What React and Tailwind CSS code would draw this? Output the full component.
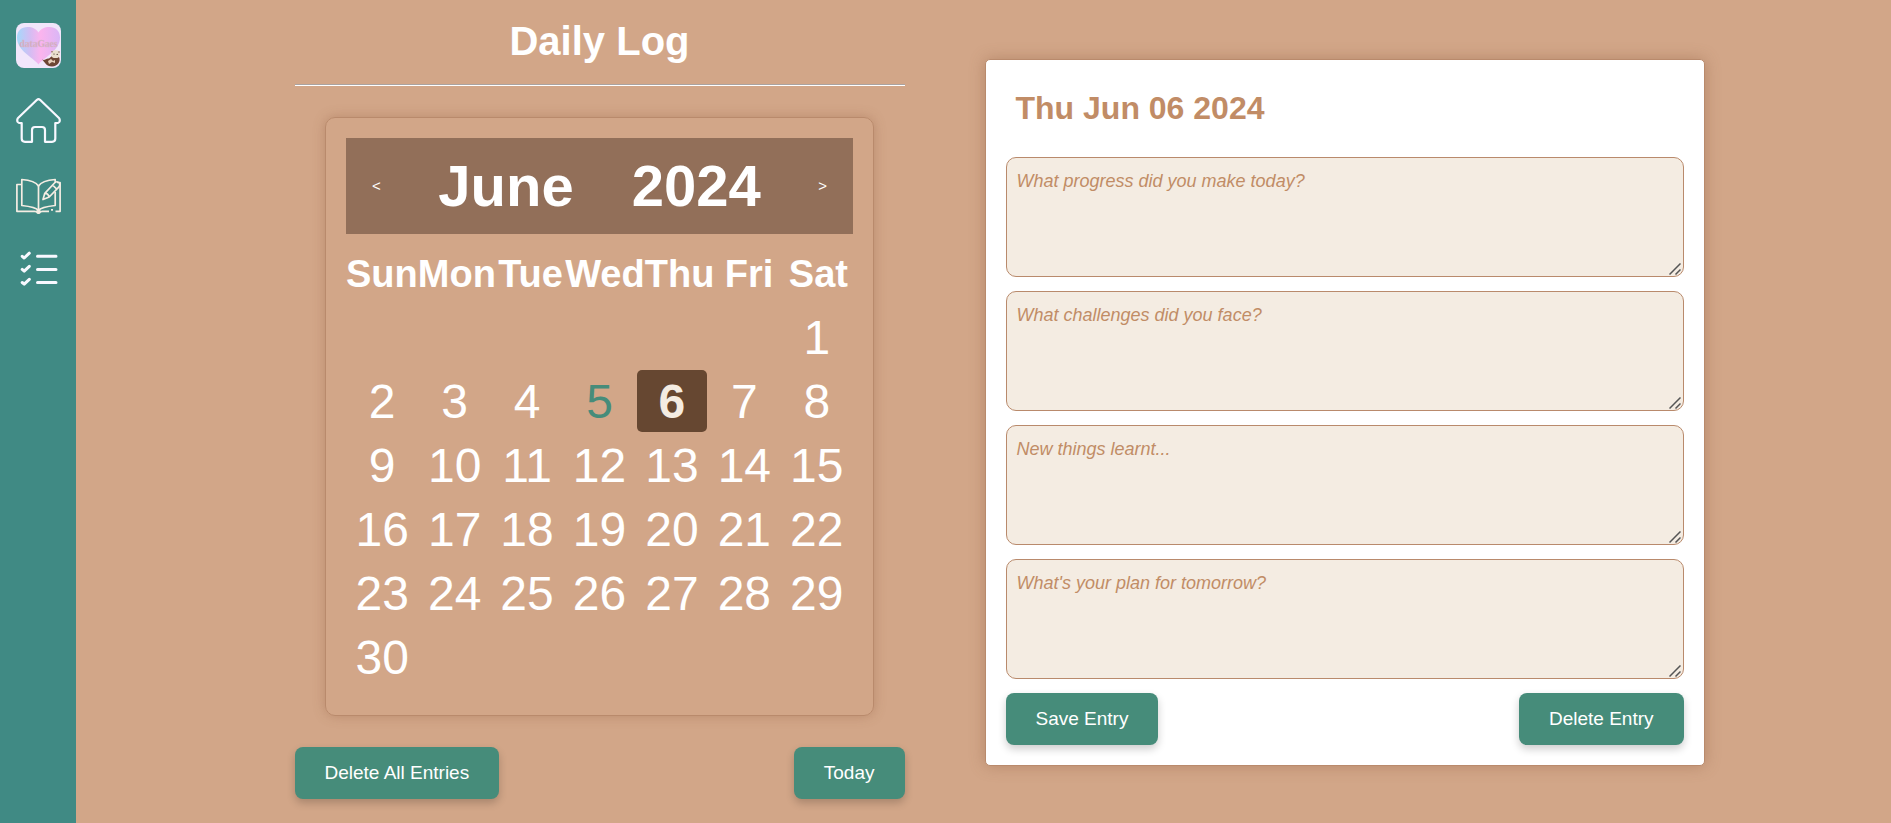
import React from "react";

const weekdays = ["Sun", "Mon", "Tue", "Wed", "Thu", "Fri", "Sat"];
const months = ["January", "February", "March", "April", "May", "June", "July", "August", "September", "October", "November", "December"];
const firstDay = new Date(2024, 5, 1).getDay();
const cells = [...Array(firstDay).fill(null), ...Array.from({ length: 30 }, (_, i) => i + 1)];
while (cells.length % 7) cells.push(null);
const weeks = Array.from({ length: cells.length / 7 }, (_, i) => cells.slice(i * 7, i * 7 + 7));

const prompts = [
  { id: "progress", text: "What progress did you make today?" },
  { id: "challenges", text: "What challenges did you face?" },
  { id: "learnt", text: "New things learnt..." },
  { id: "plan", text: "What's your plan for tomorrow?" },
];

function Logo() {
  return (
    <svg viewBox="0 0 45 45" className="size-[45px]" aria-hidden="true">
      <defs>
        <linearGradient id="heart" x1="0" x2="1" y1="0" y2="0">
          <stop offset="0" stopColor="#a5d8fb" />
          <stop offset="0.3" stopColor="#d3bdf3" />
          <stop offset="0.55" stopColor="#fbb4ee" />
          <stop offset="1" stopColor="#d9b6f6" />
        </linearGradient>
      </defs>
      <rect width="45" height="45" rx="8" fill="#f1e6fb" />
      <path d="M22.5 41.5C17 34 1 28 1 14.500C1 8 5.500 4 11.500 4C16.500 4 20.500 6 22.500 9.500C24.500 6 28.500 4 33.500 4C39.500 4 44 8 44 14.500C44 28 28 34 22.500 41.500Z" fill="url(#heart)" />
      <text x="22.5" y="24" textAnchor="middle" fontFamily="Liberation Serif, serif" fontWeight="bold" fontSize="9.5" fill="#d3a9bd" stroke="#d8b9cf" strokeWidth="0.3">dataGaes</text>
      <path d="M26 36.500C29 38 30 35 33 35.500L36 33L43 34C45 38 42 43.500 36 43.500C30 43.500 29 39 26 36.500Z" fill="#6d4534" />
      <ellipse cx="39.5" cy="31.200" rx="4.300" ry="3.900" fill="#eadfce" />
      <circle cx="36" cy="28.700" r="0.800" fill="#8a6a57" />
      <circle cx="43" cy="29" r="0.800" fill="#8a6a57" />
      <circle cx="38" cy="31" r="0.600" fill="#33231d" />
      <circle cx="41.200" cy="31.400" r="0.600" fill="#33231d" />
      <path d="M32 38L35 36L37 38L39 37L39 40L36 39L33 41Z" fill="#e5cdb8" />
    </svg>
  );
}

function HomeIcon() {
  return (
    <svg viewBox="0 0 45 45" className="size-[45px]" fill="none" stroke="#f8f8ff" strokeWidth="2.2" strokeLinejoin="round" strokeLinecap="round" aria-hidden="true">
      <path d="M21 1.800Q22.500 0.500 24 1.800L43.200 20.300Q44.300 22 43.300 24Q42.500 25.200 39.300 25V40.500Q39.300 43.800 36 43.800H29V32Q29 29 26 29H19Q16 29 16 32V43.800H9Q5.700 43.800 5.700 40.500V25Q2.500 25.200 1.700 24Q0.700 22 1.800 20.300Z" />
    </svg>
  );
}

function JournalIcon() {
  return (
    <svg viewBox="0 -1 45 45" className="size-[45px]" fill="none" stroke="#f5ede3" strokeWidth="1.7" strokeLinejoin="round" aria-hidden="true">
      <path d="M5.500 10.500H0.900V37.300H18.500Q20.500 37.300 22.500 39Q24.500 37.300 26.500 37.300H33" />
      <path d="M22.500 36.500Q20 33 5.800 31.500V5.500Q19 6.500 22.500 12Q26 6.500 39.200 5.500V9" />
      <path d="M22.500 12V38M22.500 36.500Q25 33 39.200 31.500V18" />
      <path d="M41 8.500H44.100V37.300H39.500M35 35.800H37" />
      <path d="M27 25.500L28.800 19.300L38.500 9Q41 6.500 43.300 9Q44.500 11.500 42.500 13.300L33.200 23L27 25.500ZM28.800 19.300Q32 19 33.200 23M36.500 11L40.800 15.200" />
      <circle cx="22.5" cy="37.700" r="1.500" fill="#f5ede3" />
    </svg>
  );
}

function TasksIcon() {
  return (
    <svg viewBox="0 0 45 45" className="size-[45px]" fill="none" stroke="#f8f8ff" strokeWidth="3" strokeLinejoin="round" strokeLinecap="round" aria-hidden="true">
      <path d="M6.200 8.300L8.200 10L13.300 5.200M6.200 21.400L8.200 23.100L13.300 18.300M6.200 34.500L8.200 36.200L13.300 31.400" />
      <path d="M21.500 8.300H40M21.500 21.400H40M21.500 34.500H40" />
    </svg>
  );
}

function Button({ children }) {
  return (
    <button type="button" className="rounded-lg bg-[#468c7a] px-[30px] py-4 text-[19px] leading-5 text-white shadow-[0_4px_8px_rgba(0,0,0,0.2)]">
      {children}
    </button>
  );
}

function Prompt({ id, text }) {
  return (
    <div className="relative">
      <textarea
        id={id}
        aria-label={text}
        placeholder={text}
        className="block h-[120px] w-full rounded-[10px] border border-[#b98a6c] bg-[#f4ece2] px-[10px] py-[13px] text-[18px] leading-5 text-[#664731] placeholder:text-[#c18c66] placeholder:italic [&::-webkit-resizer]:bg-transparent"
      />
      <svg viewBox="0 0 12 12" className="pointer-events-none absolute right-[3px] bottom-[2px] size-3" fill="none" stroke="#555" strokeWidth="1.5" aria-hidden="true">
        <path d="M0.500 11.500L11.500 0.500M6.500 11.500L11.500 6.500" />
      </svg>
    </div>
  );
}

export default function App() {
  return (
    <div className="flex min-h-screen bg-[#d2a688] font-['Liberation_Sans',Arial,sans-serif] text-white">
      <nav aria-label="Main" className="flex w-[76px] shrink-0 flex-col items-center gap-[30px] bg-[#408a84] pt-[23px]">
        <a href="#top" aria-label="Start"><Logo /></a>
        <a href="#home" aria-label="Home"><HomeIcon /></a>
        <a href="#journal" aria-label="Journal"><JournalIcon /></a>
        <a href="#tasks" aria-label="Tasks"><TasksIcon /></a>
      </nav>

      <main className="flex min-w-0 flex-1 items-start justify-center gap-20 pr-4 pl-12">
        <section className="w-[610px] pt-[18px]">
          <h1 className="text-center text-[40px] leading-[46px] font-bold">Daily Log</h1>
          <hr className="mt-5 border-t border-b border-t-[#aaa3a1] border-b-white" />

          <div className="mx-auto mt-[31px] w-[90%] rounded-[10px] border border-[#b98a6c] p-5 shadow-[0_0_12px_rgba(139,90,60,0.35)]">
            <div className="flex h-24 items-center justify-between bg-[#926f59] px-5">
              <button type="button" aria-label="Previous month" className="px-[6px] text-[15px]">&lt;</button>
              <h2 className="flex gap-[58px] text-[58px] leading-[68px] font-bold">
                <span>{months[5]}</span>
                <span>2024</span>
              </h2>
              <button type="button" aria-label="Next month" className="px-[6px] text-[15px]">&gt;</button>
            </div>

            <table className="mt-4 mb-[6px] block text-center">
              <thead className="block">
                <tr className="mb-[7px] flex h-12 items-center">
                  {weekdays.map((d) => (
                    <th key={d} scope="col" className="flex-1 p-0 text-[38px] leading-[44px] font-bold">{d}</th>
                  ))}
                </tr>
              </thead>
              <tbody className="block">
                {weeks.map((week, i) => (
                  <tr key={i} className="flex h-16">
                    {week.map((d, j) => (
                      <td key={j} className="flex-1 p-px">
                        {d && (
                          <button
                            type="button"
                            aria-pressed={d === 6}
                            className={
                              d === 6
                                ? "h-[62px] w-full rounded-[5px] bg-[#664731] pt-[2px] text-[48px] leading-[56px] font-bold text-[#f4ece2]"
                                : d === 5
                                  ? "h-[62px] w-full pt-[2px] text-[48px] leading-[56px] text-[#468c7a]"
                                  : "h-[62px] w-full pt-[2px] text-[48px] leading-[56px]"
                            }
                          >
                            {d}
                          </button>
                        )}
                      </td>
                    ))}
                  </tr>
                ))}
              </tbody>
            </table>
          </div>

          <div className="mt-[31px] flex justify-between">
            <Button>Delete All Entries</Button>
            <Button>Today</Button>
          </div>
        </section>

        <section className="mt-[59px] w-[720px] rounded-[5px] border border-[#b98a6c] bg-white px-5 pt-[26px] pb-5 shadow-[0_0_15px_rgba(139,90,60,0.4)]">
          <h2 className="px-[10px] text-[32px] leading-[44px] font-bold text-[#c18c66]">Thu Jun 06 2024</h2>
          <form className="mt-[27px] flex flex-col gap-[14px]">
            {prompts.map((p) => (
              <Prompt key={p.id} id={p.id} text={p.text} />
            ))}
            <div className="flex justify-between">
              <Button>Save Entry</Button>
              <Button>Delete Entry</Button>
            </div>
          </form>
        </section>
      </main>
    </div>
  );
}
